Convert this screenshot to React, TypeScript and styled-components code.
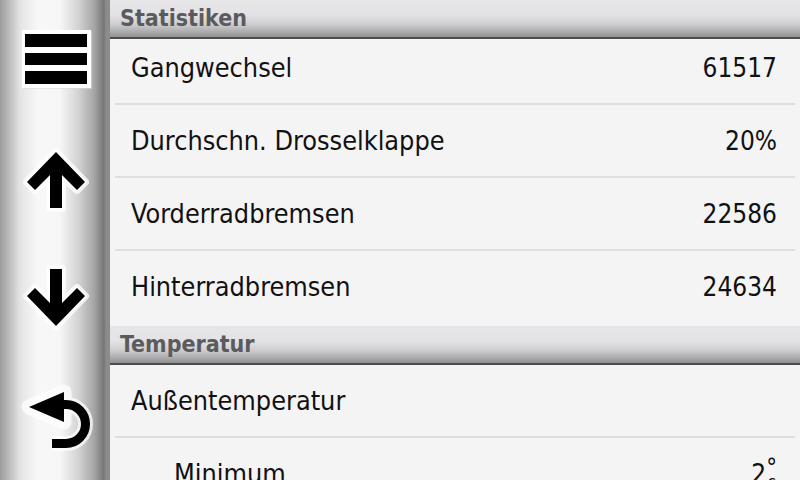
import React from 'react'
import styled, { createGlobalStyle } from 'styled-components'

const GlobalStyle = createGlobalStyle`
  html, body {
    margin: 0;
    padding: 0;
    background: #f4f3f4;
  }
  body {
    font-family: "DejaVu Sans", "Liberation Sans", sans-serif;
  }
`

const Screen = styled.div`
  display: flex;
  width: 800px;
  height: 480px;
  overflow: hidden;
  background: #f5f4f5;
`

// left button rail with the cylinder shading
const Rail = styled.div`
  display: flex;
  flex-direction: column;
  flex: 0 0 110px;
  height: 480px;
  background: linear-gradient(
    to right,
    #9c9c9c 0px,
    #b4b4b4 7px,
    #e4e4e4 20px,
    #f8f8f8 38px,
    #f6f6f6 60px,
    #d4d4d4 78px,
    #a6a6a6 94px,
    #767676 104px,
    #8c8c8c 106px,
    #8c8c8c 110px
  );
`

const RailButton = styled.button`
  display: block;
  width: 110px;
  height: 120px;
  padding: 0;
  border: 0;
  background: transparent;
  cursor: pointer;
  svg {
    display: block;
  }
`

const List = styled.div`
  display: flex;
  flex-direction: column;
  flex: 1;
  min-width: 0;
  overflow: hidden;
`

const SectionHeader = styled.div<{ $overlap?: boolean }>`
  position: relative;
  z-index: 1;
  flex: 0 0 auto;
  box-sizing: border-box;
  height: 39px;
  padding: 5px 0 0 10px;
  margin-bottom: ${(p) => (p.$overlap ? '-7px' : '0')};
  border-bottom: 2px solid #4c4c4f;
  background: linear-gradient(
    to bottom,
    #e6e6e8 0%,
    #e3e3e5 40%,
    #cfcfd1 65%,
    #adadaf 85%,
    #909092 100%
  );
  color: #5b5b5d;
  font-weight: bold;
  font-stretch: condensed;
  font-size: 23px;
  line-height: 26px;
`

const Row = styled.div<{ $last?: boolean; $indent?: boolean }>`
  display: flex;
  flex: 0 0 auto;
  align-items: center;
  justify-content: space-between;
  box-sizing: border-box;
  height: ${(p) => (p.$last ? '75px' : '71px')};
  padding: 0 23px ${(p) => (p.$last ? '4px' : '0')} ${(p) => (p.$indent ? '64px' : '21px')};
  color: #111;
  font-stretch: condensed;
  font-size: 26.8px;
`

const Divider = styled.div`
  flex: 0 0 2px;
  margin: 0 5px;
  background: #dedddf;
`

const Value = styled.span`
  display: inline-flex;
  align-items: flex-start;
  white-space: nowrap;
  font-size: 26px;
`

const Unit = styled.span`
  display: inline-flex;
  flex-direction: column;
  align-items: center;
  margin-left: 0;
  padding-top: 1px;
  span:first-child {
    font-size: 24px;
    line-height: 16px;
  }
  span:last-child {
    font-size: 17px;
    line-height: 12px;
  }
`

const MenuIcon = () => (
  <svg width="110" height="120" viewBox="0 0 110 120">
    <rect x="23" y="31" width="69" height="58" fill="#d8d8d8" opacity="0.6" />
    <rect x="22" y="30" width="69" height="58" fill="#fff" />
    <rect x="25" y="34" width="62" height="13" fill="#000" />
    <rect x="25" y="53" width="62" height="12" fill="#000" />
    <rect x="25" y="71" width="62" height="13" fill="#000" />
  </svg>
)

const Arrow = ({ points }: { points: string }) => (
  <svg width="110" height="120" viewBox="0 0 110 120">
    <polygon points={points} fill="#fff" stroke="#fff" strokeWidth="8" strokeLinejoin="round" opacity="0.75" />
    <polygon points={points} fill="#000" stroke="#fff" strokeWidth="3" strokeLinejoin="round" paintOrder="stroke" />
  </svg>
)

const BackIcon = () => (
  <svg width="110" height="120" viewBox="0 0 110 120">
    <g stroke="#fff" strokeWidth="15" strokeLinejoin="round" fill="none" opacity="0.75">
      <path d="M60 44.5 H66 A19.5 19.5 0 0 1 66 83.5 H52" />
      <polygon points="29,47 64,32 64,62" fill="#fff" />
    </g>
    <path d="M60 44.5 H66 A19.5 19.5 0 0 1 66 83.5 H52" stroke="#000" strokeWidth="9" fill="none" />
    <polygon points="29,47 64,32 64,62" fill="#000" />
  </svg>
)

const upArrow = '56,32 85,62 77,70 62,55 62,88 50,88 50,55 35,70 27,62'
const downArrow = '50,29 62,29 62,63 77,48 85,56 56,86 27,56 35,48 50,63'

const stats = [
  { label: 'Gangwechsel', value: '61517' },
  { label: 'Durchschn. Drosselklappe', value: '20%' },
  { label: 'Vorderradbremsen', value: '22586' },
  { label: 'Hinterradbremsen', value: '24634' },
]

export default function App() {
  return (
    <>
      <GlobalStyle />
      <Screen>
        <Rail>
          <RailButton aria-label="Menü">
            <MenuIcon />
          </RailButton>
          <RailButton aria-label="Nach oben">
            <Arrow points={upArrow} />
          </RailButton>
          <RailButton aria-label="Nach unten">
            <Arrow points={downArrow} />
          </RailButton>
          <RailButton aria-label="Zurück">
            <BackIcon />
          </RailButton>
        </Rail>
        <List>
          <SectionHeader $overlap>Statistiken</SectionHeader>
          {stats.map((s, i) => (
            <React.Fragment key={s.label}>
              <Row $last={i === stats.length - 1}>
                <span>{s.label}</span>
                <Value>{s.value}</Value>
              </Row>
              {i < stats.length - 1 && <Divider />}
            </React.Fragment>
          ))}
          <SectionHeader>Temperatur</SectionHeader>
          <Row>
            <span>Außentemperatur</span>
          </Row>
          <Divider />
          <Row $indent>
            <span>Minimum</span>
            <Value>
              2
              <Unit>
                <span>°</span>
                <span>c</span>
              </Unit>
            </Value>
          </Row>
        </List>
      </Screen>
    </>
  )
}
